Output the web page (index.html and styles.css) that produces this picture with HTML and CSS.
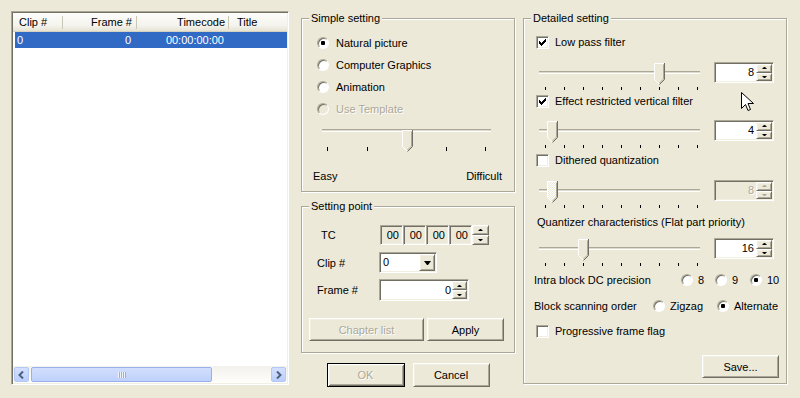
FILE: index.html
```html
<!DOCTYPE html>
<html lang="en">
<head>
<meta charset="UTF-8">
<title>Encode Settings</title>
<link rel="stylesheet" href="styles.css">
</head>
<body>
<div class="dialog">

  <div class="clip-list">
    <div class="list-head">
      <span class="col-clip">Clip #</span>
      <span class="col-frame">Frame #</span>
      <span class="col-tc">Timecode</span>
      <span class="col-title">Title</span>
    </div>
    <div class="list-body">
      <div class="list-row selected">
        <span class="col-clip">0</span>
        <span class="col-frame">0</span>
        <span class="col-tc">00:00:00:00</span>
        <span class="col-title"></span>
      </div>
    </div>
    <div class="hscroll">
      <span class="sb-btn"><svg width="7" height="8" viewBox="0 0 7 8"><path d="M5 0.5L1.5 4L5 7.5" fill="none" stroke="#4d6185" stroke-width="2"/></svg></span>
      <span class="sb-track"><span class="sb-thumb"><i class="grip"></i></span></span>
      <span class="sb-btn"><svg width="7" height="8" viewBox="0 0 7 8"><path d="M2 0.5L5.5 4L2 7.5" fill="none" stroke="#4d6185" stroke-width="2"/></svg></span>
    </div>
  </div>

  <div class="col-mid">
    <fieldset class="group simple">
      <legend>Simple setting</legend>
      <label class="opt"><span class="radio on"></span>Natural picture</label>
      <label class="opt"><span class="radio"></span>Computer Graphics</label>
      <label class="opt"><span class="radio"></span>Animation</label>
      <label class="opt disabled"><span class="radio"></span>Use Template</label>
      <div class="slider wide">
        <div class="track"></div>
        <svg class="thumb" style="left:84px" width="11" height="22" viewBox="0 0 11 22"><path d="M0.5 16.5V0.5H10.5V16.5L5.5 21.5Z" fill="#ece9d8"/><path d="M5 21L0.5 16.5V0.5H10" fill="none" stroke="#fff"/><path d="M10.5 0V16.5L5.5 21.5" fill="none" stroke="#716f64"/><path d="M9.5 1.5V16L5.5 20" fill="none" stroke="#aca899"/></svg>
        <div class="ticks"><i></i><i></i><i></i><i></i><i></i></div>
      </div>
      <div class="scale-labels"><span>Easy</span><span>Difficult</span></div>
    </fieldset>

    <fieldset class="group point">
      <legend>Setting point</legend>
      <div class="field-row tc-row">
        <span class="field-label tc-label">TC</span>
        <div class="tc">
          <span class="tc-box">00</span><span class="tc-box">00</span><span class="tc-box">00</span><span class="tc-box">00</span>
          <span class="updown"><i class="up"></i><i class="down"></i></span>
        </div>
      </div>
      <div class="field-row clip-row">
        <span class="field-label">Clip #</span>
        <div class="combo"><span class="combo-val">0</span><span class="drop"><i></i></span></div>
      </div>
      <div class="field-row frame-row">
        <span class="field-label">Frame #</span>
        <div class="spin frame-spin"><span class="spin-val">0</span><span class="updown"><i class="up"></i><i class="down"></i></span></div>
      </div>
      <div class="point-buttons">
        <button class="btn chapter" disabled>Chapter list</button>
        <button class="btn apply">Apply</button>
      </div>
    </fieldset>

    <div class="dlg-buttons">
      <button class="btn default" disabled>OK</button>
      <button class="btn">Cancel</button>
    </div>
  </div>

  <fieldset class="group detail">
    <legend>Detailed setting</legend>

    <label class="check-row lp"><span class="checkbox on"><svg width="7" height="7" viewBox="0 0 7 7"><path d="M0 2H1V3H2V4H3V3H4V2H5V1H6V0H7V3H6V4H5V5H4V6H3V7H2V6H1V5H0Z"/></svg></span>Low pass filter</label>
    <div class="slide-row s1">
      <div class="slider">
        <div class="track"></div>
        <svg class="thumb" style="left:118px" width="11" height="22" viewBox="0 0 11 22"><path d="M0.5 16.5V0.5H10.5V16.5L5.5 21.5Z" fill="#ece9d8"/><path d="M5 21L0.5 16.5V0.5H10" fill="none" stroke="#fff"/><path d="M10.5 0V16.5L5.5 21.5" fill="none" stroke="#716f64"/><path d="M9.5 1.5V16L5.5 20" fill="none" stroke="#aca899"/></svg>
        <div class="ticks"><i></i><i></i><i></i><i></i><i></i><i></i><i></i><i></i><i></i></div>
      </div>
      <div class="spin"><span class="spin-val">8</span><span class="updown"><i class="up"></i><i class="down"></i></span></div>
    </div>

    <label class="check-row erv"><span class="checkbox on"><svg width="7" height="7" viewBox="0 0 7 7"><path d="M0 2H1V3H2V4H3V3H4V2H5V1H6V0H7V3H6V4H5V5H4V6H3V7H2V6H1V5H0Z"/></svg></span>Effect restricted vertical filter</label>
    <div class="slide-row s2">
      <div class="slider">
        <div class="track"></div>
        <svg class="thumb" style="left:11px" width="11" height="22" viewBox="0 0 11 22"><path d="M0.5 16.5V0.5H10.5V16.5L5.5 21.5Z" fill="#ece9d8"/><path d="M5 21L0.5 16.5V0.5H10" fill="none" stroke="#fff"/><path d="M10.5 0V16.5L5.5 21.5" fill="none" stroke="#716f64"/><path d="M9.5 1.5V16L5.5 20" fill="none" stroke="#aca899"/></svg>
        <div class="ticks"><i></i><i></i><i></i><i></i><i></i><i></i><i></i><i></i><i></i></div>
      </div>
      <div class="spin"><span class="spin-val">4</span><span class="updown"><i class="up"></i><i class="down"></i></span></div>
    </div>

    <label class="check-row dq"><span class="checkbox"></span>Dithered quantization</label>
    <div class="slide-row s3">
      <div class="slider">
        <div class="track"></div>
        <svg class="thumb" style="left:11px" width="11" height="22" viewBox="0 0 11 22"><defs><pattern id="stipple" width="2" height="2" patternUnits="userSpaceOnUse"><rect width="2" height="2" fill="#ece9d8"/><rect width="1" height="1" fill="#fff"/><rect x="1" y="1" width="1" height="1" fill="#fff"/></pattern></defs><path d="M0.5 16.5V0.5H10.5V16.5L5.5 21.5Z" fill="url(#stipple)"/><path d="M5 21L0.5 16.5V0.5H10" fill="none" stroke="#fff"/><path d="M10.5 0V16.5L5.5 21.5" fill="none" stroke="#716f64"/><path d="M9.5 1.5V16L5.5 20" fill="none" stroke="#aca899"/></svg>
        <div class="ticks"><i></i><i></i><i></i><i></i><i></i><i></i><i></i><i></i><i></i></div>
      </div>
      <div class="spin disabled"><span class="spin-val">8</span><span class="updown"><i class="up"></i><i class="down"></i></span></div>
    </div>

    <div class="text-row quant">Quantizer characteristics (Flat part priority)</div>
    <div class="slide-row s4">
      <div class="slider">
        <div class="track"></div>
        <svg class="thumb" style="left:42px" width="11" height="22" viewBox="0 0 11 22"><path d="M0.5 16.5V0.5H10.5V16.5L5.5 21.5Z" fill="#ece9d8"/><path d="M5 21L0.5 16.5V0.5H10" fill="none" stroke="#fff"/><path d="M10.5 0V16.5L5.5 21.5" fill="none" stroke="#716f64"/><path d="M9.5 1.5V16L5.5 20" fill="none" stroke="#aca899"/></svg>
        <div class="ticks"><i></i><i></i><i></i><i></i><i></i><i></i><i></i><i></i><i></i></div>
      </div>
      <div class="spin"><span class="spin-val">16</span><span class="updown"><i class="up"></i><i class="down"></i></span></div>
    </div>

    <div class="choice-row intra">
      <span class="choice-label">Intra block DC precision</span>
      <label class="choice w34"><span class="radio"></span>8</label>
      <label class="choice w35"><span class="radio"></span>9</label>
      <label class="choice"><span class="radio on"></span>10</label>
    </div>
    <div class="choice-row scan">
      <span class="choice-label">Block scanning order</span>
      <label class="choice w64"><span class="radio"></span>Zigzag</label>
      <label class="choice"><span class="radio on"></span>Alternate</label>
    </div>

    <label class="check-row prog"><span class="checkbox"></span>Progressive frame flag</label>

    <button class="btn save">Save...</button>
  </fieldset>

  <svg class="cursor" width="13" height="21" viewBox="0 0 13 21"><path d="M0.5 0.5V16.5L4.5 12.5L7 18.5L9.5 17.5L7 11.5H12.5Z" fill="#fff" stroke="#000" stroke-linejoin="miter"/></svg>
</div>
</body>
</html>
```

FILE: styles.css
```css
body {
    margin: 0;
    background: #ece9d8;
    font-family: "Liberation Sans", Arial, sans-serif;
    font-size: 11px;
    color: #000;
}
.dialog {
    position: relative;
    display: flex;
    align-items: flex-start;
    height: 398px;
    box-sizing: border-box;
    padding: 11px 0 0 11px;
}

/* sunken / raised edges, classic style */
.clip-list, .tc-box, .combo, .spin, .checkbox {
    border: 1px solid;
    border-color: #aca899 #fff #fff #aca899;
    box-shadow: inset 1px 1px #716f64, inset -1px -1px #f1efe2;
}
.btn, .updown i, .drop {
    border: 1px solid;
    border-color: #fff #716f64 #716f64 #fff;
    box-shadow: inset 1px 1px #f1efe2, inset -1px -1px #aca899;
    background: #ece9d8;
}

/* clip list */
.clip-list {
    width: 278px;
    height: 374px;
    box-sizing: border-box;
    padding: 1px;
    display: flex;
    flex-direction: column;
    background: #fff;
}
.list-head {
    display: flex;
    height: 19px;
    box-sizing: border-box;
    background: linear-gradient(#fdfdfb, #f4f3ec 70%, #e6e3d4);
    border-bottom: 1px solid #d6d2c2;
}
.list-head span {
    line-height: 18px;
    box-sizing: border-box;
    background: linear-gradient(#cbc7b8, #cbc7b8) right center / 1px 13px no-repeat;
}
.list-head .col-clip { width: 50px; padding-left: 6px; }
.list-head .col-frame { width: 74px; text-align: right; padding-right: 5px; }
.list-head .col-tc { width: 92px; text-align: right; padding-right: 4px; }
.list-head .col-title { flex: 1; padding-left: 8px; background: none; }
.list-body {
    flex: 1;
}
.list-row {
    display: flex;
    height: 16px;
    line-height: 16px;
    margin-left: 2px;
}
.list-row span { box-sizing: border-box; }
.list-row .col-clip { width: 48px; padding-left: 2px; }
.list-row .col-frame { width: 74px; text-align: right; padding-right: 6px; }
.list-row .col-tc { width: 92px; text-align: right; padding-right: 5px; }
.list-row .col-title { flex: 1; }
.list-row.selected {
    background: #316ac5;
    color: #fff;
}

.hscroll {
    display: flex;
    height: 17px;
    background: linear-gradient(#f3f1ec, #fefefb);
}
.sb-btn {
    width: 15px;
    height: 15px;
    margin: 1px;
    box-sizing: border-box;
    display: flex;
    align-items: center;
    justify-content: center;
    background: linear-gradient(#d4e0fd, #bccffb);
    border: 1px solid #b4c8f6;
    border-radius: 2px;
}
.sb-track {
    flex: 1;
    display: flex;
}
.sb-thumb {
    width: 181px;
    margin: 1px 0 1px 1px;
    box-sizing: border-box;
    display: flex;
    align-items: center;
    justify-content: center;
    background: linear-gradient(#d2defd, #bfd1fb);
    border: 1px solid #98b1ee;
    border-radius: 2px;
}
.grip {
    width: 8px;
    height: 6px;
    background: repeating-linear-gradient(90deg, #eef3fe 0 1px, #8fb0f4 1px 2px);
}

/* group boxes */
.group {
    margin: 0;
    padding: 0;
    min-width: 0;
    box-sizing: border-box;
    border: 1px solid #aca899;
    box-shadow: inset 1px 1px #fff, 1px 1px #fff;
}
.group legend {
    padding: 0 2px;
    line-height: 13px;
    background: #ece9d8;
}
.simple legend, .point legend { margin-left: -8px; }
.detail legend { margin-left: -5px; }

.col-mid {
    width: 214px;
    margin: 1px 0 0 12px;
}
.simple {
    height: 180px;
    padding: 7px 0 0 15px;
}
.opt {
    display: flex;
    align-items: center;
    height: 22px;
}
.opt .radio { margin-right: 7px; }
.disabled, .btn:disabled {
    color: #aca899;
    text-shadow: 1px 1px #fff;
}

.radio {
    width: 12px;
    height: 12px;
    box-sizing: border-box;
    border-radius: 50%;
    border: 1px solid;
    border-color: #aca899 #fff #fff #aca899;
    box-shadow: inset 1px 1px #716f64;
    background: #fff;
    display: flex;
    align-items: center;
    justify-content: center;
    flex: none;
}
.radio.on::after {
    content: "";
    width: 4px;
    height: 4px;
    border-radius: 1px;
    background: #000;
}
.disabled .radio { background: #ece9d8; }

.checkbox {
    width: 13px;
    height: 13px;
    box-sizing: border-box;
    background: #fff;
    display: flex;
    align-items: center;
    justify-content: center;
    flex: none;
}
.checkbox svg { display: block; shape-rendering: crispEdges; }

/* trackbars */
.slider {
    position: relative;
    width: 168px;
    height: 28px;
    flex: none;
}
.track {
    margin: 9px 4px 0 3px;
    height: 1px;
    border-top: 1px solid #aca899;
    border-bottom: 1px solid #fff;
    background: #dedbcb;
}
.thumb {
    position: absolute;
    top: 1px;
}
.ticks {
    display: flex;
    justify-content: space-between;
    margin-top: 13px;
    padding: 0 6px 0 9px;
}
.ticks i {
    width: 1px;
    height: 3px;
    background: #000;
}
.slider.wide {
    width: 177px;
    height: 31px;
    margin: 5px 0 0 1px;
}
.slider.wide .track { margin: 9px 4px 0 4px; }
.slider.wide .ticks { margin-top: 15px; padding: 0 9px; }
.slider.wide .ticks i { height: 4px; }

.scale-labels {
    display: flex;
    justify-content: space-between;
    height: 18px;
    line-height: 18px;
    margin: 7px 12px 0 -4px;
}

/* setting point */
.point {
    height: 153px;
    margin-top: 8px;
    padding: 11px 0 0 15px;
}
.field-row {
    display: flex;
    align-items: center;
    height: 21px;
}
.field-label { width: 62px; }
.tc-label { width: 58px; padding-left: 4px; }
.clip-row { margin-top: 7px; }
.frame-row { margin-top: 6px; height: 22px; }
.tc {
    display: flex;
    height: 20px;
    margin-left: 1px;
}
.tc-box {
    width: 23px;
    box-sizing: border-box;
    text-align: right;
    padding-right: 3px;
    line-height: 18px;
}
.tc .updown { width: 17px; }
.updown {
    display: flex;
    flex-direction: column;
    width: 16px;
    flex: none;
}
.updown i {
    flex: 1;
    display: flex;
    align-items: center;
    justify-content: center;
}
.updown i::after {
    content: "";
    width: 1px;
    border-left: 2px solid transparent;
    border-right: 2px solid transparent;
}
.updown .up::after { border-bottom: 2px solid #000; }
.updown .down::after { border-top: 2px solid #000; }

.combo {
    display: flex;
    width: 58px;
    height: 21px;
    box-sizing: border-box;
    padding: 1px;
    background: #fff;
}
.combo-val {
    flex: 1;
    padding-left: 2px;
    line-height: 17px;
}
.drop {
    width: 16px;
    box-sizing: border-box;
    display: flex;
    align-items: center;
    justify-content: center;
}
.drop i {
    width: 1px;
    border-left: 3px solid transparent;
    border-right: 3px solid transparent;
    border-top: 4px solid #000;
}

.spin {
    display: flex;
    width: 60px;
    height: 21px;
    box-sizing: border-box;
    padding: 1px;
    background: #fff;
    margin-left: 10px;
}
.spin-val {
    flex: 1;
    text-align: right;
    padding-right: 2px;
    line-height: 17px;
}
.spin.disabled { background: #ece9d8; }
.spin.disabled .updown .up::after { border-bottom-color: #aca899; }
.spin.disabled .updown .down::after { border-top-color: #aca899; }
.frame-spin {
    width: 90px;
    height: 22px;
    margin-left: 0;
}
.frame-spin .spin-val { padding-right: 1px; line-height: 18px; }
.frame-spin .updown { width: 15px; }

/* push buttons */
.btn {
    font: inherit;
    color: #000;
    height: 23px;
    padding: 0;
}
.point-buttons {
    display: flex;
    gap: 3px;
    margin: 17px 0 0 -8px;
}
.chapter { width: 115px; }
.apply { width: 77px; }
.dlg-buttons {
    display: flex;
    justify-content: center;
    gap: 8px;
    margin-top: 10px;
}
.dlg-buttons .btn { width: 77px; height: 24px; }
.btn.default {
    width: 78px;
    border: 1px solid #000;
    box-shadow: inset 1px 1px #fff, inset -1px -1px #716f64, inset 2px 2px #f1efe2, inset -2px -2px #aca899;
}

/* detailed setting */
.detail {
    width: 264px;
    height: 372px;
    margin: 1px 0 0 8px;
    padding: 8px 0 0 12px;
}
.check-row {
    display: flex;
    align-items: center;
    height: 18px;
}
.check-row .checkbox { margin-right: 6px; }
.slide-row {
    display: flex;
    align-items: flex-start;
}
.s1 { margin-top: 11px; }
.erv { margin-top: 2px; }
.s2 { margin-top: 10px; }
.dq { margin-top: 3px; }
.s3 { margin-top: 11px; }
.text-row {
    height: 18px;
    line-height: 18px;
    margin: 5px 0 0 1px;
}
.s4 { margin-top: 7px; }
.choice-row {
    display: flex;
    align-items: center;
    height: 18px;
    margin-left: -2px;
}
.intra { margin-top: 5px; }
.scan { margin-top: 8px; }
.prog { margin-top: 7px; }
.intra .choice-label { width: 147px; }
.scan .choice-label { width: 119px; }
.choice {
    display: flex;
    align-items: center;
}
.choice .radio { margin-right: 5px; }
.w34 { width: 34px; }
.w35 { width: 35px; }
.w64 { width: 64px; }
.save {
    display: block;
    width: 77px;
    margin: 15px 7px 0 auto;
}

.cursor {
    position: absolute;
    left: 741px;
    top: 92px;
}
```
